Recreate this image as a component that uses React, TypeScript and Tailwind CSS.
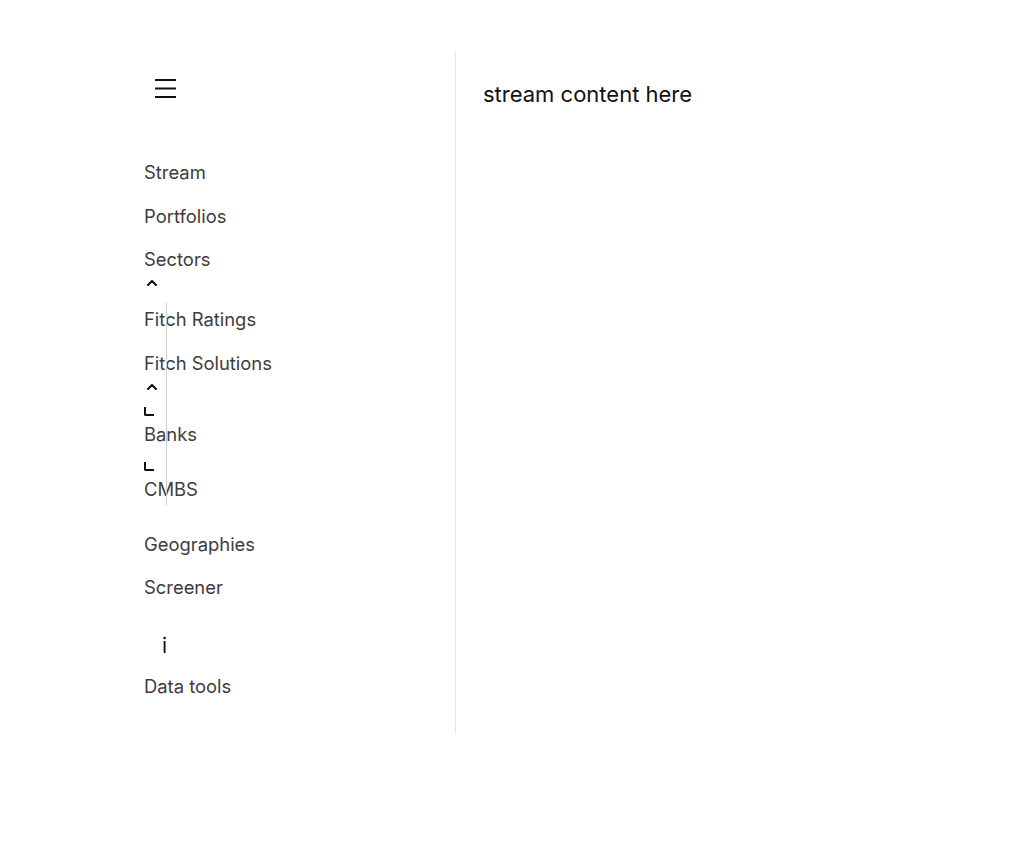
import { ReactNode } from "react";

function NavItem({ children }: { children: ReactNode }) {
  return (
    <a className="block text-[18.4px] leading-[28px] text-[#3d3d3d]">{children}</a>
  );
}

function Chevron() {
  return (
    <svg width="12" height="20" viewBox="0 0 12 20" className="ml-[2px]">
      <path d="M2 12 L6 8 L10 12" fill="none" stroke="#111" strokeWidth="2" strokeLinecap="round" strokeLinejoin="round" />
    </svg>
  );
}

function Corner() {
  return (
    <div className="h-[20px] flex items-center">
      <span className="block w-[10px] h-[9px] border-l-2 border-b-2 border-[#111] rounded-bl-[2px]" />
    </div>
  );
}

export default function App() {
  return (
    <div className="min-h-[841px] bg-white font-['Inter','Liberation_Sans',sans-serif]">
      <div className="flex pt-[51px] pl-[128px]">
        <aside className="w-[328px] border-r border-[#e8e8e8] pl-4 pb-[34px]">
          <button className="mt-[27px] ml-[10px] block">
            <svg width="22" height="20" viewBox="0 0 22 20">
              <path d="M1 2 H22 M1 10.5 H22 M1 19 H22" stroke="#111" strokeWidth="2" />
            </svg>
          </button>
          <nav className="mt-[60px] flex flex-col">
            <NavItem>Stream</NavItem>
            <div className="mt-4"><NavItem>Portfolios</NavItem></div>
            <div className="mt-[15px]"><NavItem>Sectors</NavItem></div>
            <Chevron />
            <div className="relative mt-[10px] pt-[2px] pb-[2px]">
              <span className="absolute left-[22px] top-0 bottom-0 w-px bg-[#cfcfcf]" />
              <NavItem>Fitch Ratings</NavItem>
              <div className="mt-4"><NavItem>Fitch Solutions</NavItem></div>
              <Chevron />
              <div className="mt-1"><Corner /></div>
              <div className="-mt-[1px]"><NavItem>Banks</NavItem></div>
              <div className="mt-2"><Corner /></div>
              <div className="-mt-[1px]"><NavItem>CMBS</NavItem></div>
            </div>
            <div className="mt-[25px]"><NavItem>Geographies</NavItem></div>
            <div className="mt-[15px]"><NavItem>Screener</NavItem></div>
            <div className="mt-[33px] ml-[18px] text-[21px] leading-[24px] text-[#111]">i</div>
            <div className="mt-[14px]"><NavItem>Data tools</NavItem></div>
          </nav>
        </aside>
        <main className="pl-[27px] pt-[29px]">
          <p className="text-[22px] leading-[28px] text-[#111]">stream content here</p>
        </main>
      </div>
    </div>
  );
}
